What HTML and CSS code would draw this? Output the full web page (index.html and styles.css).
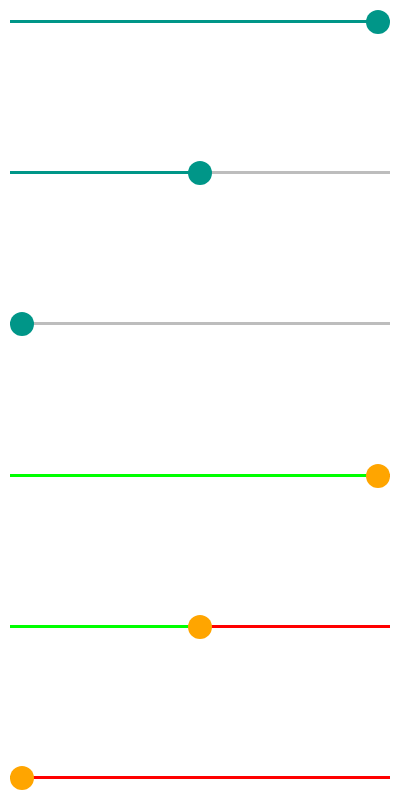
FILE: index.html
```html
<!DOCTYPE html>
<html>
<head>
  <title>Sliders</title>
  <link rel="stylesheet" href="styles.css">
</head>
<body>
  <div class="slider-list">
    <div class="slider teal" style="--v: 1"><div class="fill"></div><div class="rest"></div><div class="thumb"></div></div>
    <div class="slider teal" style="--v: 0.5"><div class="fill"></div><div class="rest"></div><div class="thumb"></div></div>
    <div class="slider teal" style="--v: 0"><div class="fill"></div><div class="rest"></div><div class="thumb"></div></div>
    <div class="slider custom" style="--v: 1"><div class="fill"></div><div class="rest"></div><div class="thumb"></div></div>
    <div class="slider custom" style="--v: 0.5"><div class="fill"></div><div class="rest"></div><div class="thumb"></div></div>
    <div class="slider custom" style="--v: 0"><div class="fill"></div><div class="rest"></div><div class="thumb"></div></div>
  </div>
</body>
</html>
```

FILE: styles.css
```css
body {
  margin: 0;
  background-color: #ffffff;
  font-family: Roboto, sans-serif;
}

.slider-list {
  display: flex;
  flex-direction: column;
  gap: 127.2px;
  padding: 10px 10px 0;
}

.slider {
  position: relative;
  display: flex;
  align-items: flex-start;
  height: 24px;
}

.fill {
  margin-top: 10px;
  height: 3px;
  width: calc(12px + var(--v) * (100% - 24px));
}

.rest {
  margin-top: 10px;
  flex: 1;
  height: 3px;
}

.thumb {
  position: absolute;
  top: 0;
  left: calc(var(--v) * (100% - 24px));
  width: 24px;
  height: 24px;
  border-radius: 50%;
}

.teal .fill, .teal .thumb {
  background-color: #009688;
}

.teal .rest {
  background-color: #bdbdbd;
}

.custom .fill {
  background-color: #00ff00;
}

.custom .rest {
  background-color: #ff0000;
}

.custom .thumb {
  background-color: #ffa500;
}
```
